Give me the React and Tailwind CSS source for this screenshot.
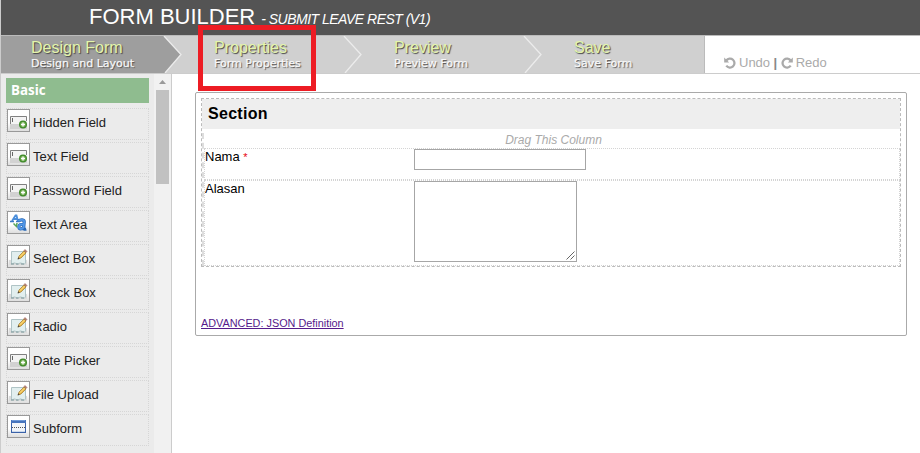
import React from "react";

const FIELDS = [
  ["Hidden Field", "field"],
  ["Text Field", "field"],
  ["Password Field", "field"],
  ["Text Area", "letters"],
  ["Select Box", "pencil"],
  ["Check Box", "pencil"],
  ["Radio", "pencil"],
  ["Date Picker", "field"],
  ["File Upload", "pencil"],
  ["Subform", "subform"],
];

function FieldArt() {
  return (
    <>
      <path d="M3 14h17v6H3z" fill="#d2d2d2" />
      <rect x="3" y="7" width="17" height="8" fill="#f4f4f4" />
      <path d="M3.500 15V7.500h16V12" fill="none" stroke="#808080" />
      <path d="M5.500 9v4" stroke="#666" />
      <circle cx="16" cy="15.500" r="4" fill="#3f8a2a" />
      <circle cx="16" cy="15.500" r="2.800" fill="#72ad52" />
      <path d="M16 13.500v4M14 15.500h4" stroke="#fff" strokeWidth="1.300" />
    </>
  );
}

function PencilArt() {
  return (
    <>
      <path d="M2 15h18v5H2z" fill="#dcdcdc" />
      <path d="M4.500 6.500h14v11.500l-1 1h-2l-1-1h-2l-1 1h-2l-1-1h-2l-1 1h-1z" fill="#e2efef" stroke="#b0c4c6" />
      <path d="M4 19h3M9 19h2.500M14 19h3" stroke="#7d979a" />
      <path d="M11 14l1-3 5-5 2 2-5 5z" fill="#e9b949" stroke="#a27a2c" strokeWidth=".7" />
      <path d="M17 5.500l1-1 2 2-1 1z" fill="#b77b6d" stroke="#8c5a50" strokeWidth=".5" />
      <path d="M12.800 11.800l4.700-4.700" stroke="#ffe28a" />
      <path d="M10.500 14.500l1-2.200 1.200 1.200z" fill="#444" />
    </>
  );
}

function LettersArt() {
  return (
    <>
      <path d="M5 10l3.500-5.500h1L11 10M6.500 8h4" fill="none" stroke="#4b8edb" strokeWidth="1.800" />
      <path d="M3 10.500h4M9 10.500h3.500" stroke="#3b77c4" strokeWidth="1.500" />
      <path d="M6.500 12.500l3 3 .5-3.500" fill="none" stroke="#58a558" strokeWidth="1.500" />
      <path d="M11.500 10c2-1.800 6-1.500 5.700 1l-.6 6c0 1.300 1.200 1.500 2.600 1M16.500 13.500h-2.500c-2.500 0-3 4.500-.3 4.500 1.300 0 2.300-.7 3-1.800" fill="none" stroke="#2968b5" strokeWidth="3.200" />
      <path d="M11.500 10c2-1.800 6-1.500 5.700 1l-.6 6M16.500 13.500h-2.500c-2.500 0-3 4.500-.3 4.500 1.300 0 2.300-.7 3-1.800" fill="none" stroke="#5298e8" strokeWidth="1.800" />
    </>
  );
}

function SubformArt() {
  return (
    <>
      <rect x="4.500" y="5.500" width="14" height="12" fill="#f2f5f9" stroke="#3b62a8" />
      <path d="M4 5h15v3H4z" fill="#4674bd" />
      <path d="M5 5.500h13" stroke="#6f9ad8" />
      <path d="M5 12.500h13" stroke="#555" strokeDasharray="1 1" />
      <path d="M5 16.500h13" stroke="#cbd9ec" />
    </>
  );
}

const ART = { field: FieldArt, pencil: PencilArt, letters: LettersArt, subform: SubformArt };

function FieldItem({ label, kind }) {
  const Art = ART[kind];
  return (
    <li className="flex h-8 w-[143px] items-start border border-dotted border-[#d6d6d6]">
      <span className="h-[23px] w-[23px] shrink-0 border border-[#999] bg-linear-to-b from-white from-60% to-[#dedede]">
        <svg width="21" height="21" viewBox="1 1 21 21"><Art /></svg>
      </span>
      <span className="ml-[3px] mt-[5px] whitespace-nowrap text-[13px] leading-[18px] text-[#222]">{label}</span>
    </li>
  );
}

function Step({ title, sub, active, last }) {
  return (
    <div className={"flex h-[37px] shrink-0 justify-between " + (active ? "w-[183px] bg-[#9e9e9e] pl-[30px]" : last ? "w-[161px] border-r border-[#bbb] bg-[#d0d0d0] pl-[30px]" : "w-[180px] bg-[#d0d0d0] pl-[30px]")}>
      <div className="whitespace-nowrap">
        <div className="mt-[2px] text-[16px] leading-[19px] text-[#e4f5ab] [text-shadow:1px_1px_1px_#444]">{title}</div>
        <div className="font-['DejaVu_Sans'] text-[11px] leading-[13px] text-[#f8f8f8] [-webkit-text-stroke:0.25px_#f8f8f8] [text-shadow:1px_1px_1px_#444]">{sub}</div>
      </div>
      {!last && (
        <svg width="22" height="37" viewBox="0 0 22 37">
          {active && <path d="M2 0L19 18.500 3 37H22V0z" fill="#d0d0d0" />}
          <path d="M2 0L19 18.500 3 37" fill="none" stroke="#ececec" strokeWidth="1.300" />
        </svg>
      )}
    </div>
  );
}

function TurnIcon({ flip }) {
  return (
    <svg width="12" height="12" viewBox="0 0 12 12" className={flip ? "-scale-x-100" : ""}>
      <path d="M2.300 3.500A4.500 4.500 0 1 1 2.300 8.700" fill="none" stroke="#aaa" strokeWidth="2.300" />
      <path d="M.2.500V5.400H5.100z" fill="#aaa" />
    </svg>
  );
}

export default function App() {
  return (
    <div className="relative flex h-[453px] w-[920px] flex-col overflow-hidden border-l border-[#ccc] bg-white font-['Liberation_Sans',Arial,sans-serif] text-black">
      <header className="flex h-[35px] shrink-0 items-baseline bg-[#545454] pl-[88px] text-white">
        <h1 className="whitespace-nowrap text-[22px] leading-[33px]">FORM BUILDER</h1>
        <span className="ml-[6px] whitespace-nowrap text-[14px] italic tracking-[-0.52px]">- SUBMIT LEAVE REST (V1)</span>
      </header>

      <nav className="flex h-[39px] shrink-0 border-y border-t-[#bbb] border-b-[#ccc]">
        <Step title="Design Form" sub="Design and Layout" active />
        <Step title="Properties" sub="Form Properties" />
        <Step title="Preview" sub="Preview Form" />
        <Step title="Save" sub="Save Form" last />
        <div className="ml-[19px] flex items-center whitespace-nowrap pt-[17px] text-[13px] text-[#aaa]">
          <TurnIcon />
          <span className="ml-[3px]">Undo</span>
          <span className="mx-[3.5px] font-bold text-[#888]">|</span>
          <TurnIcon flip />
          <span className="ml-[3px]">Redo</span>
        </div>
      </nav>

      <div className="flex min-h-0 flex-1">
        <aside className="flex w-[171px] shrink-0 overflow-hidden border-r border-[#ccc] bg-[#ebebeb]">
          <div className="w-[153px] shrink-0 pl-[5px] pt-1">
            <h2 className="h-[25px] w-[143px] bg-[#8fbc8f] pl-[5px] font-['Open_Sans'] text-[13.33px] font-bold leading-[25px] text-white">Basic</h2>
            <ul className="mt-[5px] flex flex-col gap-[2px]">
              {FIELDS.map(([label, kind]) => <FieldItem key={label} label={label} kind={kind} />)}
            </ul>
          </div>
          <div className="flex w-[17px] flex-col items-center bg-[#f1f1f1] pt-[6px]">
            <svg width="7" height="4" viewBox="0 0 7 4"><path d="M0 4L3.500 0 7 4z" fill="#999" /></svg>
            <div className="mt-[6px] h-[94px] w-[13px] bg-[#c1c1c1]" />
          </div>
        </aside>

        <main className="pl-[23px] pt-[18px]">
          <div className="h-[244px] w-[712px] rounded-[2px] border border-[#aaa] px-[5px] pt-[5px]">
            <section className="h-[169px] border border-dashed border-[#bbb]">
              <h3 className="h-[30px] bg-[#eee] pl-[6px] text-[16px] font-bold leading-[30px] tracking-[0.3px]">Section</h3>
              <div className="mt-[4px] h-[133px] border-l-2 border-dashed border-[#ddd]">
                <div className="h-[15px] pl-[3px] text-center text-[12px] italic leading-[15px] text-[#aaa]">Drag This Column</div>
                <div className="flex h-8 border border-dotted border-[#d4d4d4]">
                  <label className="w-[209px] text-[13px] leading-[15px]">Nama <span className="text-[11px] text-red-600">*</span></label>
                  <input className="h-[21px] w-[172px] border border-[#a6a6a6] bg-white outline-none" />
                </div>
                <div className="flex h-[86px] border border-dotted border-[#d4d4d4]">
                  <label className="w-[209px] text-[13px] leading-[15px]">Alasan</label>
                  <div className="flex h-[81px] w-[163px] items-end justify-end border border-[#a6a6a6] p-px">
                    <svg width="9" height="9" viewBox="0 0 9 9"><path d="M.5 8.500l8-8M4.500 8.500l4-4" stroke="#555" strokeWidth=".9" /></svg>
                  </div>
                </div>
              </div>
            </section>
            <a className="mt-[50px] block whitespace-nowrap text-[10.85px] leading-[13px] text-[#551a8b] underline">ADVANCED: JSON Definition</a>
          </div>
        </main>
      </div>

      <div className="pointer-events-none absolute left-[197px] top-[25px] h-[66px] w-[118px] border-[5px] border-[#ed1c24]" />
    </div>
  );
}
